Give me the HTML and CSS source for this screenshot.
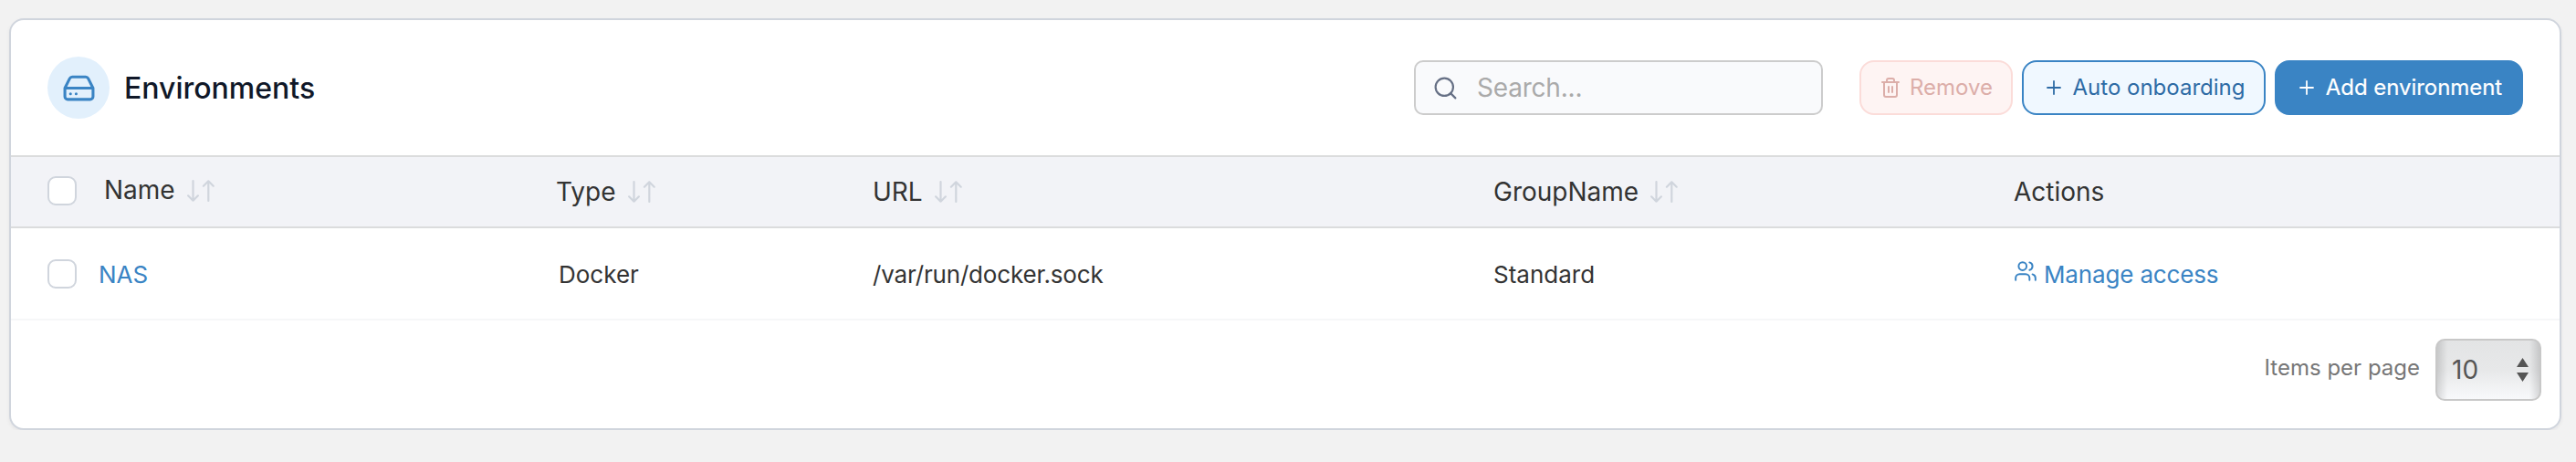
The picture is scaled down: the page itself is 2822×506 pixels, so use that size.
FILE: index.html
```
<!DOCTYPE html>
<html lang="en">
<head>
<meta charset="utf-8">
<title>Environments</title>
<link rel="stylesheet" href="styles.css">
</head>
<body>
<svg class="sprite" aria-hidden="true">
  <symbol id="sort" viewBox="0 0 30 24">
    <path d="M6.5 1.1v21.6M1.1 17.3l5.4 5.4 5.4-5.4M23.3 22.9V1.3M17.9 6.7l5.4-5.4 5.4 5.4"/>
  </symbol>
  <symbol id="plus" viewBox="0 0 24 24"><path d="M12 5v14M5 12h14"/></symbol>
</svg>
<main class="card">
  <header class="card-header">
    <span class="badge">
      <svg class="icon badge-icon" viewBox="0 0 24 24"><path d="M22 12H2M5.45 5.11L2 12v6a2 2 0 0 0 2 2h16a2 2 0 0 0 2-2v-6l-3.45-6.89A2 2 0 0 0 16.76 4H7.24a2 2 0 0 0-1.79 1.11zM6 16h.01M10 16h.01"/></svg>
    </span>
    <h1 class="title">Environments</h1>
    <label class="search">
      <svg class="icon search-icon" viewBox="0 0 24 24"><circle cx="11" cy="11" r="8"/><path d="M21 21l-4.35-4.35"/></svg>
      <span class="search-text">Search...</span>
    </label>
    <div class="buttons">
      <button class="btn btn-danger" disabled>
        <svg class="icon btn-icon" viewBox="0 0 24 24"><path d="M3 6h18M19 6v14a2 2 0 0 1-2 2H7a2 2 0 0 1-2-2V6M8 6V4a2 2 0 0 1 2-2h4a2 2 0 0 1 2 2v2M10 11v6M14 11v6"/></svg>
        <span>Remove</span>
      </button>
      <button class="btn btn-secondary">
        <svg class="icon btn-icon plus"><use href="#plus"/></svg>
        <span>Auto onboarding</span>
      </button>
      <button class="btn btn-primary">
        <svg class="icon btn-icon plus"><use href="#plus"/></svg>
        <span class="add-label">Add environment</span>
      </button>
    </div>
  </header>
  <div class="row head">
    <div class="cell first"><span class="check"></span><span class="name-head">Name</span><svg class="icon sort"><use href="#sort"/></svg></div>
    <div class="cell">Type<svg class="icon sort"><use href="#sort"/></svg></div>
    <div class="cell shift">URL<svg class="icon sort"><use href="#sort"/></svg></div>
    <div class="cell">GroupName<svg class="icon sort"><use href="#sort"/></svg></div>
    <div class="cell">Actions</div>
  </div>
  <div class="row body">
    <div class="cell first"><span class="check"></span><a class="link name">NAS</a></div>
    <div class="cell type">Docker</div>
    <div class="cell shift url">/var/run/docker.sock</div>
    <div class="cell">Standard</div>
    <div class="cell">
      <a class="link access">
        <svg class="icon users" viewBox="0 0 24 24"><path d="M16 21v-2a4 4 0 0 0-4-4H6a4 4 0 0 0-4 4v2"/><circle cx="9" cy="7" r="4"/><path d="M22 21v-2a4 4 0 0 0-3-3.87M16 3.13a4 4 0 0 1 0 7.75"/></svg>
        <span class="access-label">Manage access</span>
      </a>
    </div>
  </div>
  <footer class="footer">
    <span class="per-page">Items per page</span>
    <div class="select">
      <span>10</span>
      <svg class="arrows" viewBox="0 0 13 26"><path d="M6.5 0L13 10H0zM6.5 26L13 16H0z"/></svg>
    </div>
  </footer>
</main>
</body>
</html>
```
FILE: styles.css
```
* { box-sizing: border-box; }

body {
  margin: 0;
  padding: 20px 16px 0 10px;
  background: #f2f2f2;
  color: #333;
  font: 400 26px Inter, sans-serif;
}

.sprite { display: none; }

.icon {
  flex: none;
  fill: none;
  stroke: currentColor;
  stroke-width: 2;
  stroke-linecap: round;
  stroke-linejoin: round;
}

.card {
  height: 451px;
  border: 2px solid #d0d5dd;
  border-radius: 16px;
  background: #fff;
  box-shadow: 0 2px 4px rgba(16, 24, 40, 0.06);
  overflow: hidden;
}

.card-header {
  display: flex;
  align-items: center;
  height: 148px;
  padding: 0 40px;
}

.badge {
  display: flex;
  align-items: center;
  justify-content: center;
  width: 68px;
  height: 68px;
  border-radius: 50%;
  background: #e2f0fc;
  color: #3a84c4;
}

.badge-icon { width: 37px; height: 37px; stroke-width: 2; }

.title {
  margin: 0 auto 0 16px;
  color: #101828;
  font-size: 32px;
  font-weight: 500;
}

.search {
  display: flex;
  align-items: center;
  width: 448px;
  height: 60px;
  margin-right: 40px;
  padding-left: 18px;
  border: 2px solid #ccc;
  border-radius: 10px;
  background: #f9fafc;
}

.search-icon { width: 29px; height: 29px; color: #667085; stroke-width: 1.8; }

.search-text {
  margin-left: 20px;
  color: #aaa;
  font-size: 28px;
  letter-spacing: -0.2px;
}

.buttons { display: flex; gap: 10px; }

.btn {
  display: flex;
  align-items: center;
  gap: 9px;
  height: 60px;
  padding: 0;
  border: 2px solid;
  border-radius: 16px;
  font: 400 24px Inter, sans-serif;
  justify-content: center;
  white-space: nowrap;
}

.btn span { padding-bottom: 1px; }
.btn-icon { width: 24px; height: 24px; }
.plus { stroke-width: 1.8; }

.btn-danger { width: 168px; border-color: #fbdcd9; background: #fef4f3; color: #dcaea9; }
.btn-secondary { width: 267px; border-color: #3a84c4; background: #f0f8ff; color: #2d6ba5; }
.btn-primary { width: 272px; border-color: #3a84c4; background: #3a84c4; color: #fff; }
.add-label { letter-spacing: -0.05px; -webkit-text-stroke: 0.2px currentColor; }

.row {
  display: grid;
  grid-template-columns: 557px 346px 681px 570px 1fr;
  align-items: center;
  padding-left: 40px;
}

.head {
  height: 80px;
  border: solid #dbdcdd;
  border-width: 2px 0;
  background: #f2f3f7;
  font-size: 28px;
}

.body { height: 101px; border-bottom: 2px solid #f6f7f8; }
.cell { display: flex; align-items: center; }

.check {
  width: 32px;
  height: 32px;
  border: 2px solid #d0d5dd;
  border-radius: 9px;
  background: #fff;
}

.head .first { padding-bottom: 3px; }
.name-head { margin-left: 30px; padding-bottom: 1px; }
.sort { width: 30px; height: 24px; margin-left: 13px; color: #d0d5dd; stroke-width: 2.2; }

.link { color: #3a84c4; }
.name { margin-left: 24px; }
.body .cell { padding-top: 1px; }
.body .type { padding-left: 3px; }
.row .shift { padding-left: 1px; }
.url { letter-spacing: -0.17px; }
.access { display: flex; align-items: center; gap: 7px; }
.access-label { letter-spacing: -0.15px; }
.users { width: 26px; height: 26px; margin-bottom: 7px; stroke-width: 1.8; }

.footer {
  display: flex;
  justify-content: flex-end;
  align-items: center;
  gap: 17px;
  padding: 20px 20px 0 0;
}

.per-page { padding-bottom: 5px; color: #777; font-size: 24px; }

.select {
  display: flex;
  align-items: center;
  justify-content: space-between;
  width: 116px;
  height: 68px;
  padding: 0 12px 0 16px;
  border: 2px solid #c8c8c8;
  border-radius: 10px;
  background:
    linear-gradient(to right, rgba(0, 0, 0, 0.13), transparent 10%, transparent 90%, rgba(0, 0, 0, 0.13)),
    linear-gradient(#e3e4e5, #e7e8e9 50%, #f8f9fb);
  color: #555;
  font-size: 28px;
}

.arrows { width: 13px; height: 26px; fill: currentColor; }
```
